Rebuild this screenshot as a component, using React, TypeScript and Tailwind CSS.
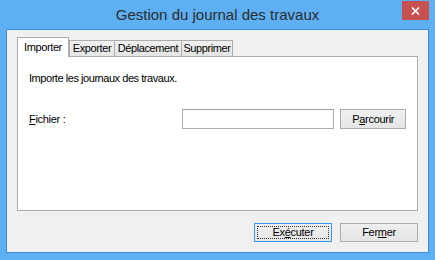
import React from "react";

const font = { fontFamily: "'Liberation Sans', Arial, sans-serif" };

function Tab({ label, active, w }: { label: string; active?: boolean; w: string }) {
  if (active) {
    return (
      <div className={`relative z-10 -mb-px flex h-[20px] items-center justify-center border border-b-0 border-[#acacac] bg-white text-[11px] tracking-[-0.4px] text-black ${w}`}>
        {label}
      </div>
    );
  }
  return (
    <div className={`-ml-px flex h-[16px] items-center justify-center border border-b-0 border-[#acacac] bg-gradient-to-b from-[#f0f0f0] to-[#e5e5e5] text-[11px] tracking-[-0.4px] text-black first:ml-0 ${w}`}>
      {label}
    </div>
  );
}

function Button({ children, focused, className = "" }: { children: React.ReactNode; focused?: boolean; className?: string }) {
  return (
    <div
      className={`flex items-center justify-center border ${focused ? "border-[#3399ff]" : "border-[#acacac]"} bg-gradient-to-b from-[#f0f0f0] to-[#e5e5e5] text-[11px] tracking-[-0.3px] text-black ${className}`}
    >
      {focused ? (
        <div className="m-[2px] flex h-[calc(100%-4px)] w-[calc(100%-4px)] items-center justify-center border border-dotted border-[#333]">
          {children}
        </div>
      ) : (
        children
      )}
    </div>
  );
}

export default function App() {
  return (
    <div className="flex h-[260px] w-[435px] flex-col bg-[#5eb0f4]" style={font}>
      <div className="grid h-[29px] grid-cols-[1fr_auto_1fr] items-start">
        <div />
        <div className="pt-[5px] text-[15px] leading-[20px] text-[#2b2b2b]">
          Gestion du journal des travaux
        </div>
        <div className="flex justify-end pr-[6px] pt-[1px]">
          <div className="flex h-[19px] w-[27px] items-center justify-center bg-[#c75050]">
            <svg width="9" height="8" viewBox="0 0 9 8">
              <path d="M1 0.5 L8 7.5 M8 0.5 L1 7.5" stroke="white" strokeWidth="1.6" />
            </svg>
          </div>
        </div>
      </div>
      <div className="mx-[6px] flex h-[224px] flex-col border border-[#3d8ad8] bg-[#f0f0f0]">
        <div className="ml-[10px] mr-[10px] mt-[7px] flex flex-col">
          <div className="flex items-end">
            <Tab label="Importer" active w="w-[52px]" />
            <div className="flex">
              <Tab label="Exporter" w="w-[46px]" />
              <Tab label="Déplacement" w="w-[68px]" />
              <Tab label="Supprimer" w="w-[52px]" />
            </div>
          </div>
          <div className="flex h-[155px] flex-col border border-[#acacac] bg-white px-[11px]">
            <div className="mt-[14px] text-[11px] leading-[14px] tracking-[-0.45px] text-black">Importe les journaux des travaux.</div>
            <div className="mt-[24px] flex items-center">
              <div className="w-[154px] text-[11px] tracking-[-0.3px] text-black">
                <span className="underline">F</span>ichier :
              </div>
              <div className="h-[20px] w-[153px] border border-[#abadb3] border-t-[#a0a0a0] bg-white" />
              <Button className="ml-[6px] h-[20px] w-[66px]">
                <span>
                  P<span className="underline">a</span>rcourir
                </span>
              </Button>
            </div>
          </div>
        </div>
        <div className="mr-[10px] mt-[12px] flex justify-end gap-[8px]">
          <Button focused className="h-[19px] w-[78px]">
            <span>
              Ex<span className="underline">é</span>cuter
            </span>
          </Button>
          <Button className="h-[19px] w-[78px]">
            <span>
              Fer<span className="underline">m</span>er
            </span>
          </Button>
        </div>
      </div>
    </div>
  );
}
